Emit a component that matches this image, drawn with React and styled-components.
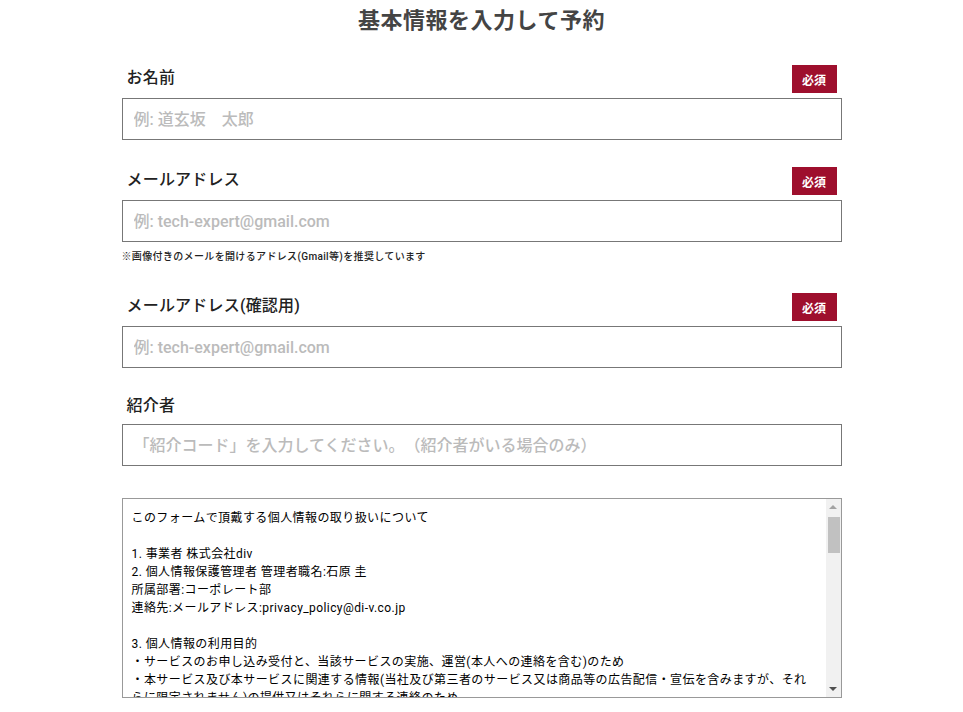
import React from "react";
import styled, { createGlobalStyle } from "styled-components";

const Global = createGlobalStyle`
  html, body { margin: 0; padding: 0; background: #fff; }
  body {
    font-family: Roboto, "Noto Sans CJK JP", sans-serif;
    color: #222;
    text-spacing-trim: space-all;
  }
  * { box-sizing: border-box; }
`;

const Page = styled.div`
  width: 720px;
  margin: 0 auto;
  padding-top: 6px;
`;

const Title = styled.h1`
  margin: 0 0 29px;
  text-align: center;
  font-size: 22px;
  line-height: 30px;
  font-weight: 700;
  color: #444;
  letter-spacing: 0.5px;
`;

const Field = styled.div`
  display: flex;
  flex-direction: column;
  margin-bottom: 27px;
`;

const LabelRow = styled.div`
  display: flex;
  align-items: center;
  justify-content: space-between;
  min-height: ${(p) => (p.$badge ? 28 : 24)}px;
  margin-bottom: 5px;
  padding: 0 5px;
`;

const Label = styled.label`
  font-size: 16px;
  line-height: 22px;
  font-weight: 500;
  color: #222;
  letter-spacing: 0.2px;
  padding-bottom: 2px;
`;

const Badge = styled.span`
  display: inline-flex;
  align-items: center;
  justify-content: center;
  width: 45px;
  height: 28px;
  background: #9e0f2d;
  color: #fff;
  font-size: 12px;
  font-weight: 700;
`;

const Input = styled.input`
  width: 100%;
  height: 42px;
  border: 1px solid #777;
  border-radius: 0;
  padding: 0 11px;
  font-family: Roboto, "Noto Sans CJK JP", sans-serif;
  font-size: 16px;
  font-weight: 500;
  color: #222;
  outline: none;
  text-spacing-trim: space-all;
  &::placeholder { color: #bbb; font-weight: 500; }
`;

const Note = styled.p`
  margin: 8px 0 2px;
  font-size: 10px;
  line-height: 14px;
  letter-spacing: 0.35px;
  color: #222;
  font-weight: 500;
`;

const PolicyBox = styled.div`
  display: flex;
  height: 200px;
  margin-top: 32px;
  border: 1px solid #999;
  background: #fff;
`;

const PolicyText = styled.textarea`
  flex: 1;
  min-width: 0;
  height: 100%;
  border: none;
  border-radius: 0;
  padding: 10px 9px;
  resize: none;
  overflow: hidden;
  font-family: Roboto, "Noto Sans CJK JP", sans-serif;
  font-size: 12px;
  font-weight: 400;
  line-height: 18px;
  letter-spacing: 0.42px;
  color: #000;
  outline: none;
  text-spacing-trim: space-all;
`;

const ScrollBar = styled.div`
  width: 15px;
  flex: none;
  display: flex;
  flex-direction: column;
  background: #f1f1f1;
`;

const ScrollButton = styled.div`
  height: 16px;
  flex: none;
  display: flex;
  align-items: center;
  justify-content: center;
`;

const Arrow = styled.span`
  width: 0;
  height: 0;
  border-left: 4px solid transparent;
  border-right: 4px solid transparent;
  ${(p) =>
    p.$dir === "up"
      ? `border-bottom: 4px solid #a3a3a3;`
      : `border-top: 4px solid #505050;`}
`;

const Track = styled.div`
  flex: 1;
  padding: 2px 1px 0 2px;
`;

const Thumb = styled.div`
  height: 36px;
  background: #c1c1c1;
`;

const policyText = `このフォームで頂戴する個人情報の取り扱いについて

1. 事業者 株式会社div
2. 個人情報保護管理者 管理者職名:石原 圭
所属部署:コーポレート部
連絡先:メールアドレス:privacy_policy@di-v.co.jp

3. 個人情報の利用目的
・サービスのお申し込み受付と、当該サービスの実施、運営(本人への連絡を含む)のため
・本サービス及び本サービスに関連する情報(当社及び第三者のサービス又は商品等の広告配信・宣伝を含みますが、それらに限定されません)の提供又はそれらに関する連絡のため
・本サービスの改善、新たなサービスの開発のため
・お問い合わせへの対応のため

4. 個人情報の第三者提供について
当社は、法令に基づく場合を除き、ご本人の同意を得ることなく、個人情報を第三者に提供することはありません。

5. 個人情報の取り扱いの委託について
当社は、利用目的の達成に必要な範囲内において、個人情報の取り扱いの全部又は一部を委託する場合があります。

6. 個人情報の開示等の請求について
ご本人は、当社に対して、ご自身の個人情報の利用目的の通知、開示、内容の訂正、追加又は削除、利用の停止、消去及び第三者への提供の停止を求めることができます。`;

export default function App() {
  return (
    <>
      <Global />
      <Page>
        <Title>基本情報を入力して予約</Title>

        <Field>
          <LabelRow $badge>
            <Label>お名前</Label>
            <Badge>必須</Badge>
          </LabelRow>
          <Input placeholder="例: 道玄坂　太郎" />
        </Field>

        <Field>
          <LabelRow $badge>
            <Label>メールアドレス</Label>
            <Badge>必須</Badge>
          </LabelRow>
          <Input placeholder="例: tech-expert@gmail.com" />
          <Note>※画像付きのメールを開けるアドレス(Gmail等)を推奨しています</Note>
        </Field>

        <Field>
          <LabelRow $badge>
            <Label>メールアドレス(確認用)</Label>
            <Badge>必須</Badge>
          </LabelRow>
          <Input placeholder="例: tech-expert@gmail.com" />
        </Field>

        <Field>
          <LabelRow>
            <Label>紹介者</Label>
          </LabelRow>
          <Input placeholder="「紹介コード」を入力してください。（紹介者がいる場合のみ）" />
        </Field>

        <PolicyBox>
          <PolicyText readOnly value={policyText} />
          <ScrollBar>
            <ScrollButton>
              <Arrow $dir="up" />
            </ScrollButton>
            <Track>
              <Thumb />
            </Track>
            <ScrollButton>
              <Arrow $dir="down" />
            </ScrollButton>
          </ScrollBar>
        </PolicyBox>
      </Page>
    </>
  );
}
